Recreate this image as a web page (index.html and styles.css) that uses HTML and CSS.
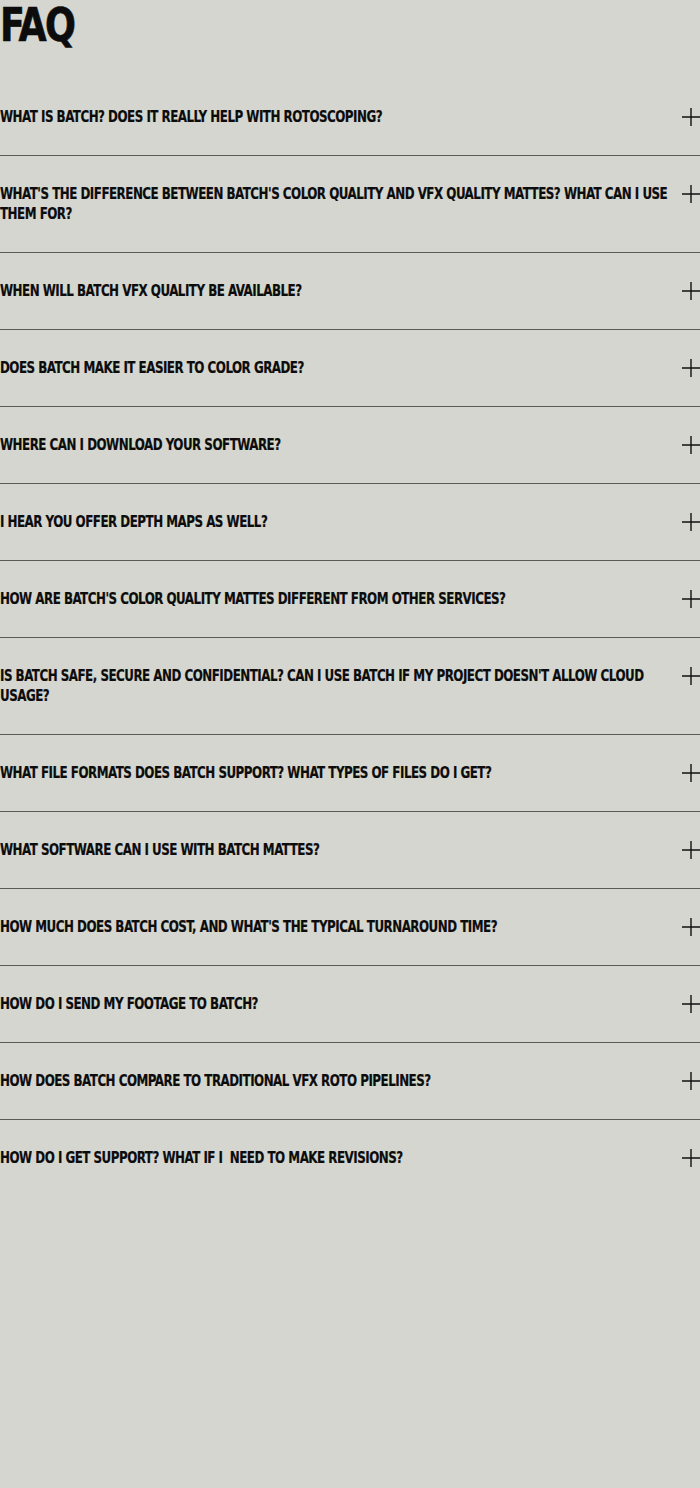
FILE: index.html
```html
<!DOCTYPE html>
<html lang="en">
<head>
    <meta charset="UTF-8">
    <meta name="viewport" content="width=device-width, initial-scale=1.0">
    <title>FAQ</title>
    <link rel="stylesheet" href="styles.css">
</head>
<body>

<section class="faq">
    <h2><span>FAQ</span></h2>
    <div class="faq-list" id="faqList"></div>
</section>

<script>
    let questions = [
        "What is Batch? Does it really help with rotoscoping?",
        "What's the difference between Batch's color quality and VFX quality mattes? What can I use them for?",
        "When will Batch VFX quality be available?",
        "Does Batch make it easier to color grade?",
        "Where can I download your software?",
        "I hear you offer depth maps as well?",
        "How are Batch's color quality mattes different from other services?",
        "Is Batch safe, secure and confidential? Can I use Batch if my project doesn't allow cloud usage?",
        "What file formats does Batch support? What types of files do I get?",
        "What software can I use with Batch mattes?",
        "How much does Batch cost, and what's the typical turnaround time?",
        "How do I send my footage to Batch?",
        "How does Batch compare to traditional VFX roto pipelines?",
        "How do I get support? What if I&nbsp; need to make revisions?"
    ];
    function renderFaq() {
        let list = document.getElementById("faqList");
        list.innerHTML = "";
        questions.forEach(q => {
            list.innerHTML += `
                <div class="faq-item">
                    <div class="question"><span class="q-text">${q}</span></div>
                    <svg class="plus" width="18" height="18" viewBox="0 0 18 18">
                        <path d="M9 0V18M0 9H18" stroke="#111" stroke-width="1.4" fill="none"/>
                    </svg>
                </div>
            `;
        });
    }
    renderFaq();
</script>

</body>
</html>
```

FILE: styles.css
```css
body {
    margin: 0;
    background-color: #d5d6d0;
    color: #0c0c0c;
    font-family: "DejaVu Sans Condensed", "Liberation Sans", sans-serif;
}
.faq {
    width: 700px;
}
h2 {
    margin: 0;
    height: 79px;
    font-size: 46px;
    line-height: 50px;
    font-weight: 700;
    letter-spacing: -2px;
}
/* the type is a condensed grotesk, so squeeze the glyphs horizontally */
h2 span {
    display: inline-block;
    transform: scaleX(0.88);
    transform-origin: left top;
    -webkit-text-stroke: 0.6px #0c0c0c;
}
.faq-item {
    display: flex;
    align-items: flex-start;
    justify-content: space-between;
    gap: 4px;
    padding: 28px 0;
    border-bottom: 1px solid #5a5b56;
}
.faq-item:last-child {
    border-bottom: none;
}
.question {
    flex: 1;
    overflow: hidden;
}
.q-text {
    display: block;
    width: calc(100% / 0.825);
    transform: scaleX(0.825);
    transform-origin: left top;
    font-size: 16px;
    line-height: 20px;
    font-weight: 700;
    text-transform: uppercase;
    letter-spacing: -0.6px;
    -webkit-text-stroke: 0.2px #0c0c0c;
}
.plus {
    flex-shrink: 0;
    margin-top: 1px;
}
```
